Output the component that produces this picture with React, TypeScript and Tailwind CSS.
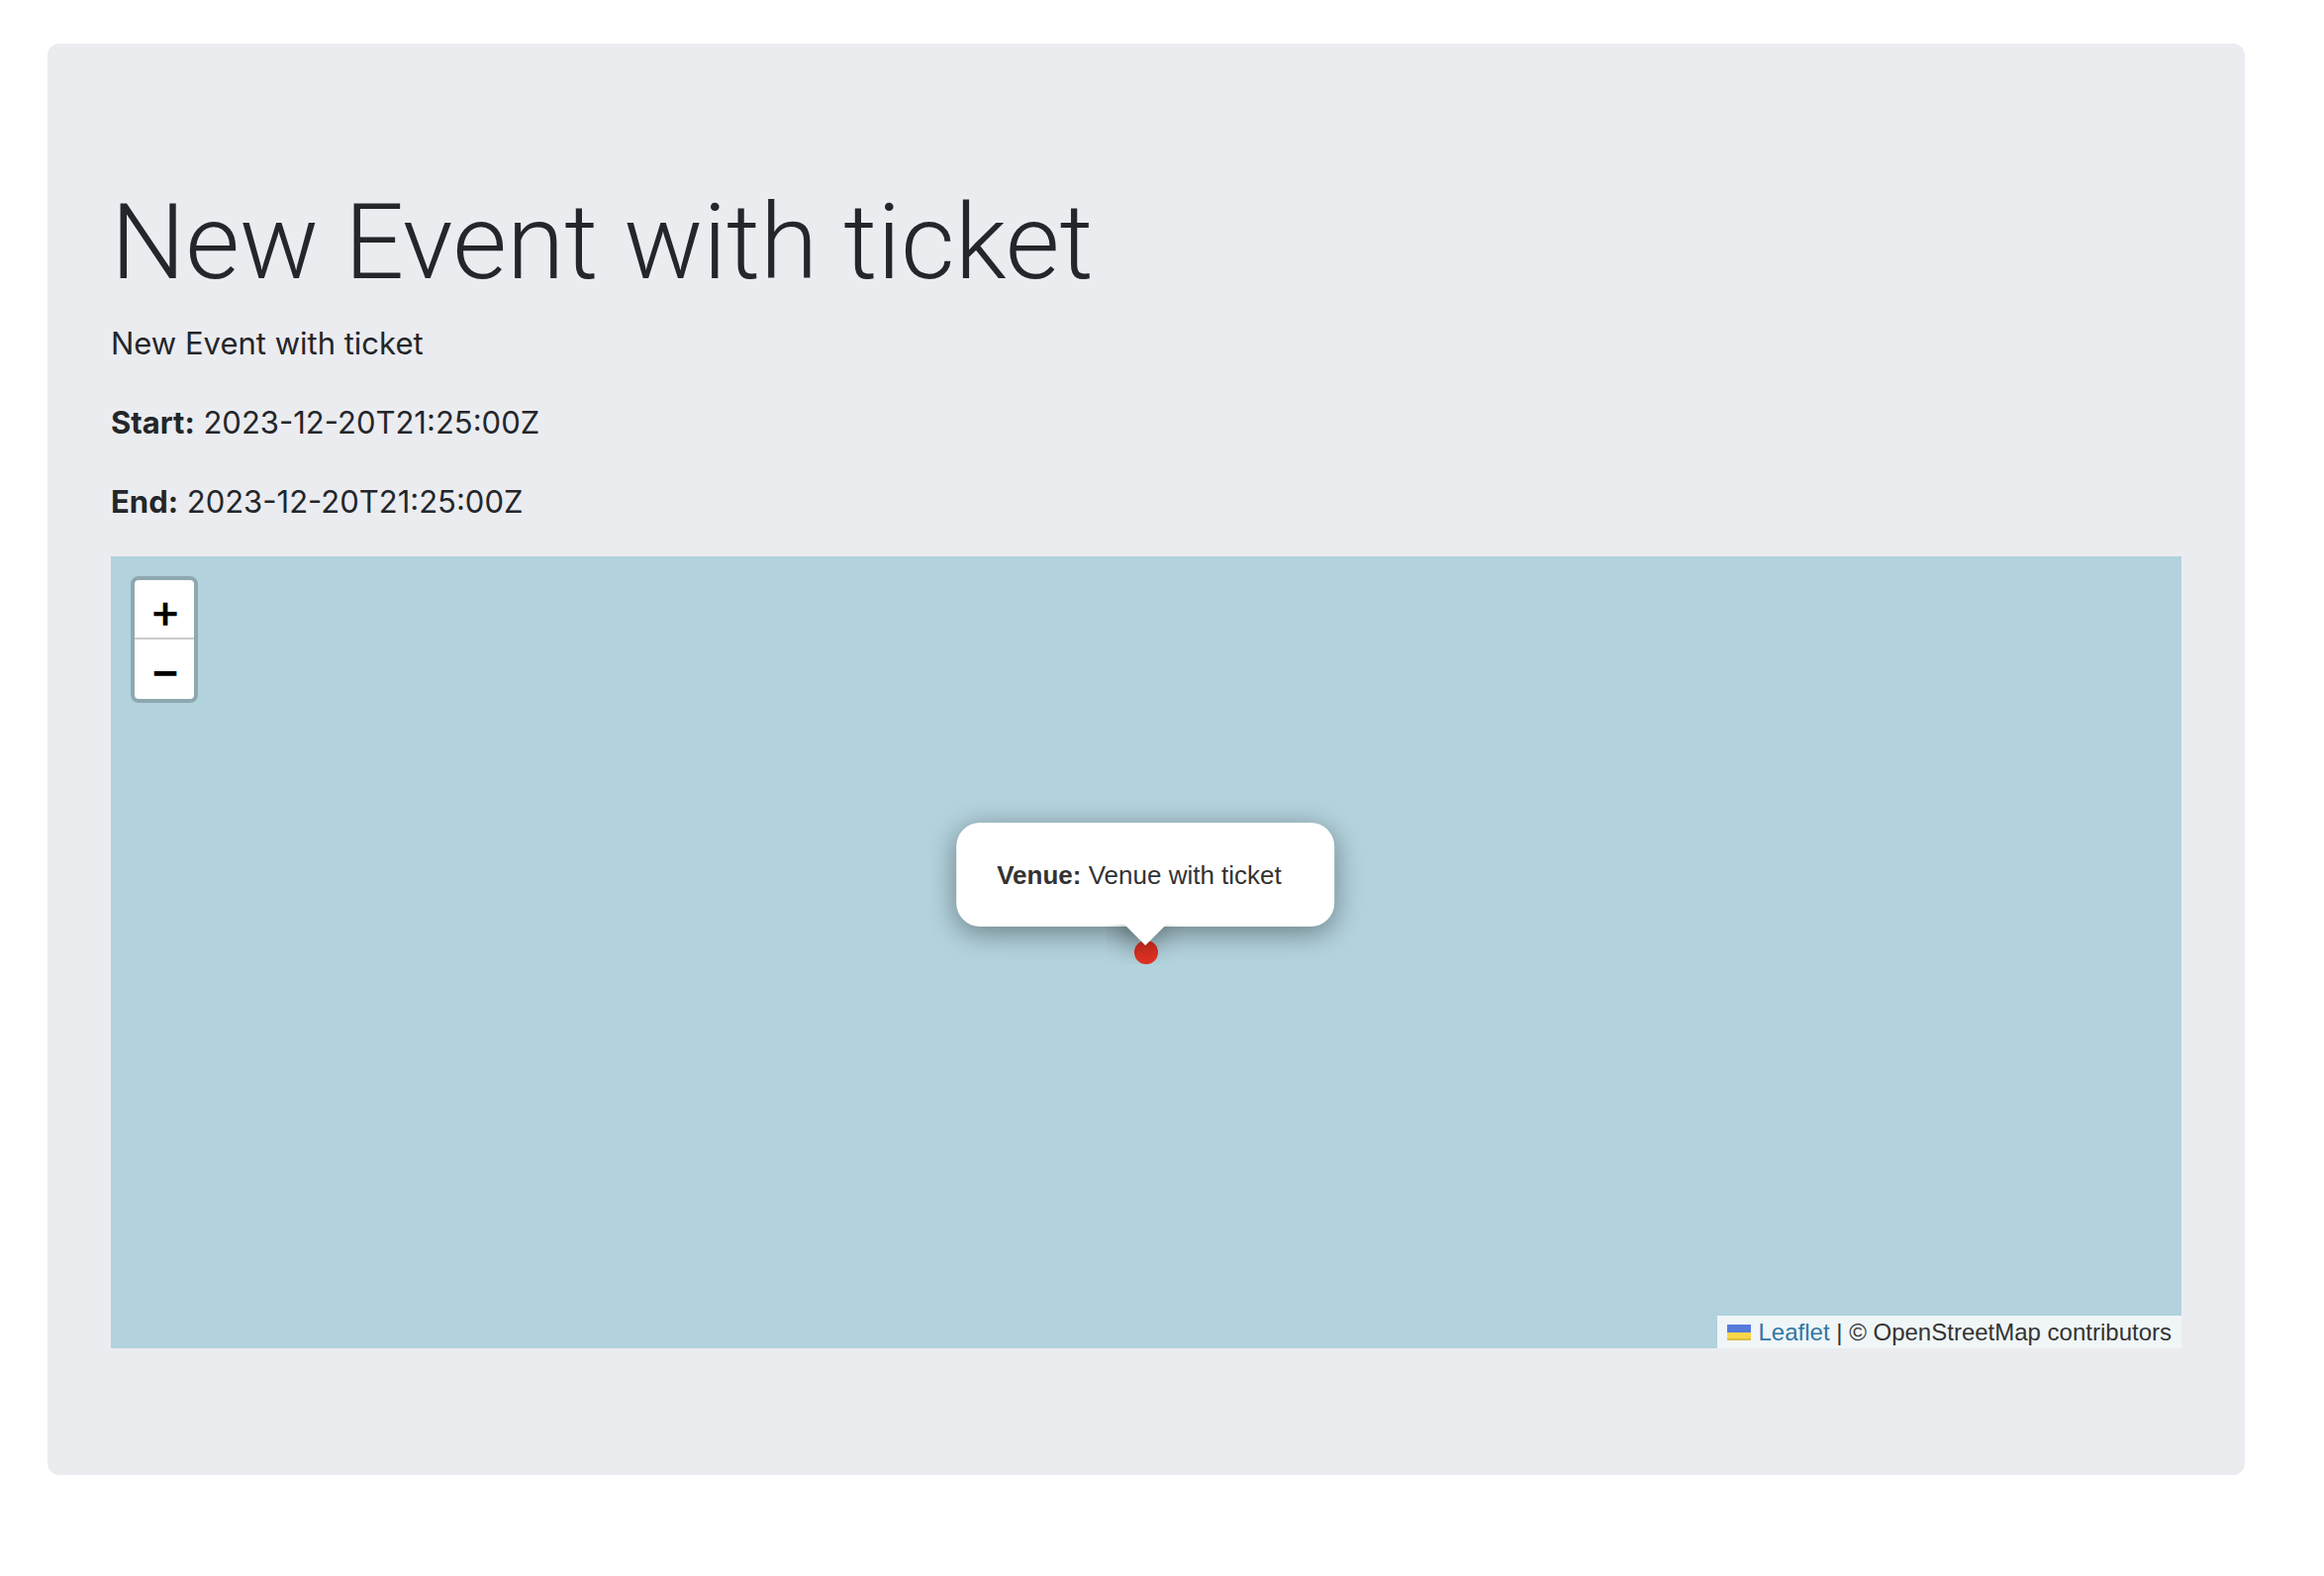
function ZoomControl() {
  const button =
    "flex h-[60px] w-[60px] cursor-pointer items-center justify-center bg-white pl-0.5 text-[48px] leading-none font-medium text-black";
  return (
    <div className="absolute top-5 left-5 overflow-hidden rounded-lg border-4 border-black/20 bg-clip-padding">
      <button type="button" aria-label="Zoom in" className={`${button} rounded-t-[4px] border-b-2 border-[#ccc] pt-1`}>
        +
      </button>
      <button type="button" aria-label="Zoom out" className={`${button} rounded-b-[4px] pt-0.5`}>
        −
      </button>
    </div>
  );
}

function VenuePopup() {
  return (
    <div className="absolute bottom-1/2 left-1/2 mb-[26px] -ml-px w-max -translate-x-1/2 font-['Liberation_Sans',Arial,sans-serif]">
      <div className="rounded-3xl bg-white pt-[37px] pr-[53px] pb-[35px] pl-[41px] text-[26px] leading-[33px] whitespace-nowrap text-[#333] shadow-[0_6px_28px_rgba(0,0,0,0.4)]">
        <p>
          <strong className="font-bold">Venue:</strong> Venue with ticket
        </p>
      </div>
      <div className="absolute top-full left-1/2 -mt-0.5 h-10 w-20 -translate-x-1/2 overflow-hidden">
        <div className="mx-auto -mt-5 h-[34px] w-[34px] rotate-45 bg-white shadow-[0_6px_28px_rgba(0,0,0,0.4)]" />
      </div>
    </div>
  );
}

function Flag() {
  return (
    <svg aria-hidden="true" width="24" height="16" viewBox="0 0 12 8" className="mr-2 shrink-0">
      <path fill="#567bdb" d="M0 0h12v4H0z" />
      <path fill="#f9d64a" d="M0 4h12v3H0z" />
      <path fill="#dcbd3f" d="M0 7h12v1H0z" />
    </svg>
  );
}

function EventMap() {
  return (
    <div className="relative h-[800px] overflow-hidden bg-[#b2d2dd]">
      <div className="absolute top-1/2 left-1/2 h-6 w-6 -translate-x-1/2 -translate-y-1/2 rounded-full bg-[#e33223]" />
      <VenuePopup />
      <ZoomControl />
      <div className="absolute right-0 bottom-0 flex h-[33px] items-center bg-white/80 px-2.5 font-['Liberation_Sans',Arial,sans-serif] text-2xl leading-[33px] whitespace-pre text-[#333]">
        <Flag />
        <a href="https://leafletjs.com" className="text-[#3077a5]">
          Leaflet
        </a>
        <span> | © OpenStreetMap contributors</span>
      </div>
    </div>
  );
}

export default function App() {
  return (
    <main className="pt-11 pr-20 pb-[102px] pl-12 font-['Inter',sans-serif] text-[#23262a]">
      <section className="rounded-xl bg-[#ebecf0] px-16 py-32">
        <h1 className="mb-1 font-['Roboto',sans-serif] text-[106px] leading-[147px] font-light">
          New Event with ticket
        </h1>
        <div className="mb-[31px] space-y-8 text-[31px] leading-[48px]">
          <p>New Event with ticket</p>
          <p>
            <strong className="font-bold">Start:</strong> 2023-12-20T21:25:00Z
          </p>
          <p>
            <strong className="font-bold">End:</strong> 2023-12-20T21:25:00Z
          </p>
        </div>
        <EventMap />
      </section>
    </main>
  );
}
